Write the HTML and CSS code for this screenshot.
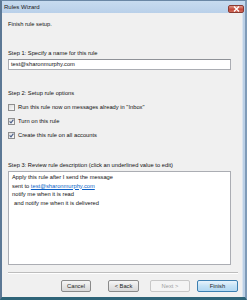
FILE: index.html
```
<html>
<head>
<meta charset="utf-8" />
<link rel="stylesheet" href="styles.css">
</head>
<body>
    <div class="window">
        <div class="titlebar">
            <span class="title">Rules Wizard</span>
            <div class="close-btn">
                <svg width="7" height="6" viewBox="0 0 7 6">
                    <path d="M1 0.5 L6 5.5 M6 0.5 L1 5.5" stroke="#fff" stroke-width="1.4" />
                </svg>
            </div>
        </div>
        <div class="client">
            <div class="heading">Finish rule setup.</div>

            <div class="label step1">Step 1: Specify a name for this rule</div>
            <div class="textbox">test@sharonmurphy.com</div>

            <div class="label step2">Step 2: Setup rule options</div>
            <div class="options">
                <div class="option">
                    <span class="check"></span>
                    <span>Run this rule now on messages already in "Inbox"</span>
                </div>
                <div class="option">
                    <span class="check checked">
                        <svg width="5" height="5" viewBox="0 0 5 5"><path d="M0.6 2.4 L2 3.9 L4.4 0.6" fill="none" stroke="#4a5f8a" stroke-width="1.1" /></svg>
                    </span>
                    <span>Turn on this rule</span>
                </div>
                <div class="option">
                    <span class="check checked">
                        <svg width="5" height="5" viewBox="0 0 5 5"><path d="M0.6 2.4 L2 3.9 L4.4 0.6" fill="none" stroke="#4a5f8a" stroke-width="1.1" /></svg>
                    </span>
                    <span>Create this rule on all accounts</span>
                </div>
            </div>

            <div class="label step3">Step 3: Review rule description (click an underlined value to edit)</div>
            <div class="description">
                <div>Apply this rule after I send the message</div>
                <div>sent to <a href="#" class="value">test@sharonmurphy.com</a></div>
                <div>notify me when it is read</div>
                <div class="indent">and notify me when it is delivered</div>
            </div>

            <div class="separator"></div>

            <div class="buttons">
                <div class="button cancel">Cancel</div>
                <div class="button back">&lt; Back</div>
                <div class="button next disabled">Next &gt;</div>
                <div class="button finish default">Finish</div>
            </div>
        </div>
    </div>
</body>
</html>
```
FILE: styles.css
```
body {
    margin: 0px;
    background: #fff;
    font-family: "Liberation Sans", Arial, sans-serif;
    font-size: 5.75px;
    color: #111;
}

.window {
    width: 247px;
    height: 300px;
    display: flex;
    flex-direction: column;
    background: #bcd0e6;
    box-sizing: border-box;
    border-left: 2px solid #5c7895;
    border-right: 2px solid #7f9bb8;
    border-bottom: 3px solid #2e6478;
    border-top: 1px solid #6a87a5;
}

.titlebar {
    height: 12px;
    display: flex;
    align-items: center;
    justify-content: space-between;
    background: linear-gradient(to bottom, #c7dbef, #b9d0e9);
    padding-left: 2px;
    padding-right: 1px;
}
.title {
    font-size: 6px;
    color: #1a1a1a;
}
.close-btn {
    width: 16px;
    height: 8px;
    margin-top: 3px;
    background: linear-gradient(to bottom, #e09a8c, #c4493a 55%, #d06a5a);
    border: 1px solid #8a3a32;
    border-radius: 2px;
    box-sizing: border-box;
    display: flex;
    align-items: center;
    justify-content: center;
}

.client {
    flex: 1;
    background: #f0f0f0;
    margin-right: 2px;
    padding-left: 6px;
    padding-right: 4px;
    display: flex;
    flex-direction: column;
    border-right: 1px solid #d9e4f0;
}

.heading {
    margin-top: 6px;
    line-height: 10px;
}

.label {
    line-height: 10px;
}
.step1 { margin-top: 19px; }
.step2 { margin-top: 18px; }
.step3 { margin-top: 18px; }

.textbox {
    margin-top: 1px;
    margin-right: 7px;
    height: 11px;
    box-sizing: border-box;
    border: 1px solid #abadb3;
    border-top-color: #8e9197;
    background: #fff;
    padding-left: 2px;
    line-height: 9px;
}

.options {
    margin-top: 2px;
}
.option {
    height: 14px;
    display: flex;
    align-items: center;
    gap: 3px;
}
.check {
    width: 7px;
    height: 7px;
    box-sizing: border-box;
    border: 1px solid #8f8f8f;
    background: linear-gradient(135deg, #dcdcdc, #fbfbfb);
    display: flex;
    align-items: center;
    justify-content: center;
}

.description {
    margin-top: 1px;
    margin-right: 7px;
    height: 94px;
    box-sizing: border-box;
    border: 1px solid #abadb3;
    background: #fff;
    padding: 1px 3px;
    line-height: 8.5px;
}
.description .indent {
    padding-left: 2px;
}
.value {
    color: #0b5fc6;
}

.separator {
    margin-top: 7px;
    height: 1px;
    background: #bdbdbd;
    border-bottom: 1px solid #fff;
}

.buttons {
    margin-top: 6px;
    display: flex;
    justify-content: flex-end;
}
.button {
    height: 12px;
    box-sizing: border-box;
    border: 1px solid #8a8a8a;
    border-radius: 2px;
    background: linear-gradient(to bottom, #f6f6f6, #e6e6e6 50%, #d8d8d8);
    display: flex;
    align-items: center;
    justify-content: center;
    color: #1e1e1e;
}
.cancel { width: 30px; }
.back { width: 31px; margin-left: 17px; }
.next { width: 40px; margin-left: 11px; }
.finish { width: 41px; margin-left: 7px; }
.disabled {
    color: #a0a0a0;
    border-color: #c8c8c8;
    background: #f4f4f4;
}
.default {
    border-color: #3c7fb1;
    background: linear-gradient(to bottom, #e8f4fc, #c4e2f6 50%, #b2d8f2);
}
```
